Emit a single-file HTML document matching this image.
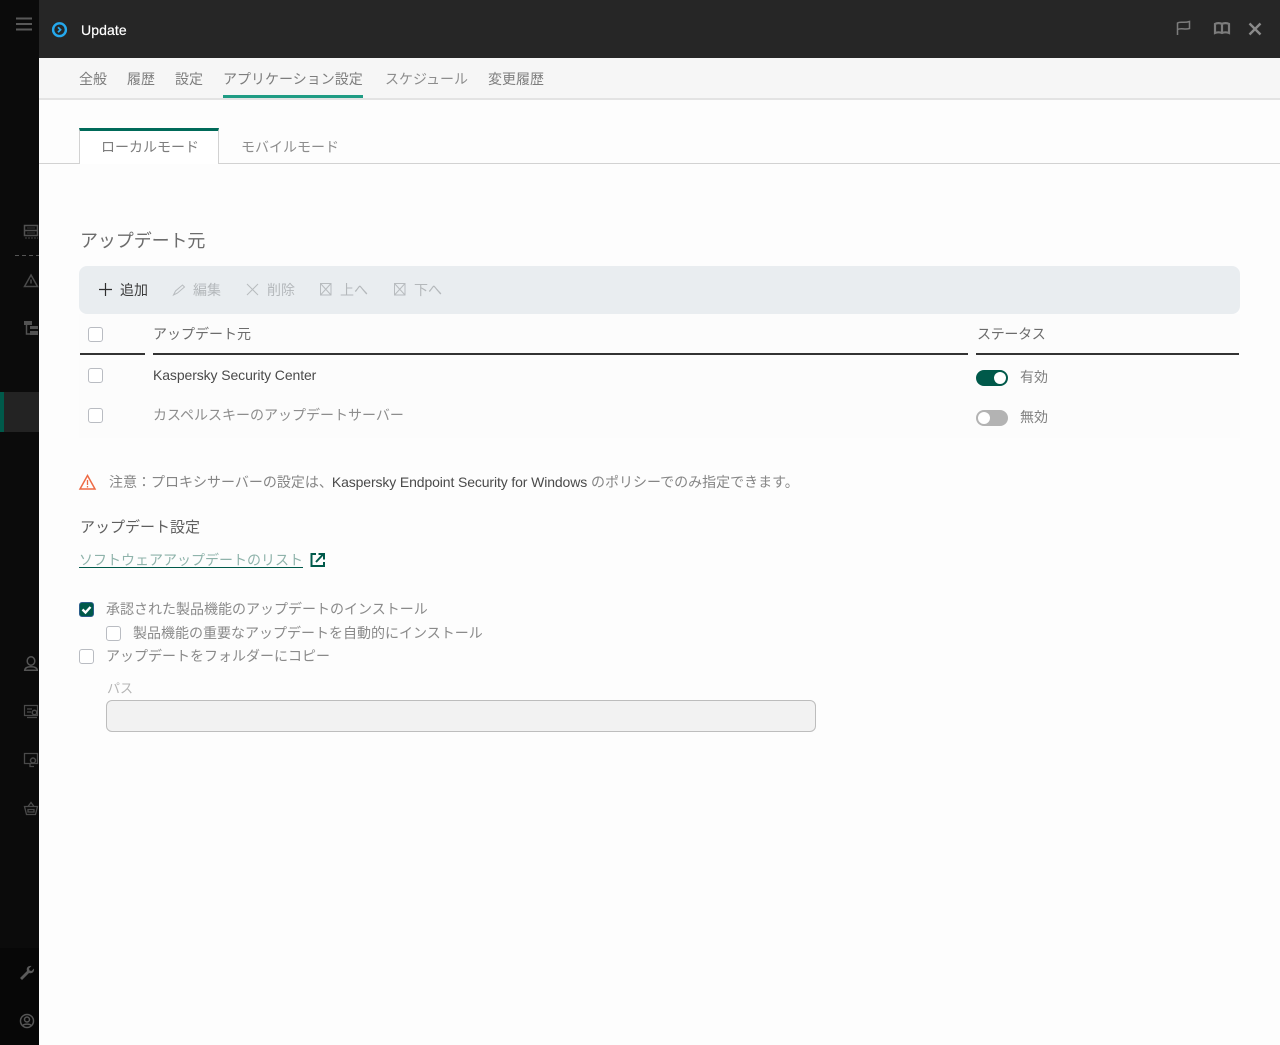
<!DOCTYPE html>
<html lang="ja"><head><meta charset="utf-8"><title>Update</title>
<style>
html,body{margin:0;padding:0;background:#fdfdfd}
body{width:1280px;height:1045px;position:relative;overflow:hidden;font-family:"Liberation Sans","Noto Sans CJK JP",sans-serif;font-size:14px;color:#5c5c5c}
.a{position:absolute;white-space:nowrap;line-height:20px}
.b{position:absolute}
.cb{position:absolute;width:13px;height:13px;border:1px solid #b9bcc2;border-radius:3px;background:#fff}
.nav{top:69px;color:#7d7d7d}
.lat{color:#4a4a4a}
svg{position:absolute;overflow:visible}
</style></head><body>
<div class="b" style="left:0;top:0;width:39px;height:1045px;background:#0b0b0b"></div>
<div class="b" style="left:0;top:948px;width:39px;height:97px;background:#070707"></div>
<div class="b" style="left:39px;top:0;width:1241px;height:58px;background:#262626"></div>
<div class="b" style="left:39px;top:58px;width:1241px;height:40px;background:#f6f6f6;border-bottom:2px solid #e3e3e3"></div>
<div class="b" style="left:0;top:392px;width:39px;height:40px;background:#232323"></div>
<div class="b" style="left:0;top:392px;width:4px;height:40px;background:#00594a"></div>

<svg style="left:0;top:0" width="39" height="1045" fill="none" stroke="#4a4a4a" stroke-width="1.500">
<path d="M16 18.500H32M16 24H32M16 29.500H32" stroke="#585858" stroke-width="2"/>
<path d="M24.500 225.500h13v5h-13zM24.500 230.500h13v5h-13z" stroke="#505050"/>
<path d="M27 228h8M27 233h8" stroke="#333" stroke-width="1"/>
<path d="M25 238h13" stroke="#444" stroke-width="1" stroke-dasharray="2 1"/>
<path d="M15 255.500H39" stroke="#555" stroke-width="1" stroke-dasharray="4 3"/>
<path d="M31 275l6.500 11.500h-13zM31 279.500v4"/>
<path d="M24 321h8v4h-8zM30 326h8v3h-8zM30 331h8v4h-8z" fill="#525252" stroke="none"/>
<path d="M26.500 325v9H30" stroke="#525252"/>
<ellipse cx="31" cy="661" rx="3.800" ry="4.200" stroke="#555"/>
<path d="M24.700 670.300c.3-3 3.500-3.500 6.300-3.500s6 .5 6.300 3.500z" stroke="#555"/>
<path d="M24.500 705.500h13v10h-13zM27 709h5M27 712h4M27 717.500h10" stroke-width="1.200"/>
<circle cx="34.500" cy="712.500" r="2.300" fill="#0b0b0b"/>
<path d="M24.500 753.500h13v10h-13zM30 763.500v3h4" stroke-width="1.300"/>
<circle cx="33" cy="760.500" r="2.500" fill="#0b0b0b"/>
<path d="M24.500 806.500h13l-2 8h-9zM28 806.500l3-4 3 4M28 809.500h6v2.500h-6z" stroke-width="1.300"/>
<path d="M20 978l7-7c-1-3 1-5.500 4.500-5l-2.500 2.500.5 2 2 .5 2.500-2.500c.5 3.500-2 5.500-5 4.500l-7 7z" fill="#5a5a5a" stroke="none"/>
<circle cx="27" cy="1021" r="6.500" stroke="#555"/>
<circle cx="27" cy="1019.500" r="2.500" stroke="#555"/>
<path d="M22.500 1026c1-2.500 8-2.500 9 0" stroke="#555"/>
</svg>

<svg style="left:51px;top:21px" width="18" height="18" fill="none"><circle cx="8.500" cy="8.700" r="6.400" stroke="#25a9ee" stroke-width="2.400"/><path d="M7 6.200l2.500 2.500L7 11.200" stroke="#25a9ee" stroke-width="1.800"/></svg>
<div class="a" style="left:81px;top:20px;color:#fff;font-size:14px;letter-spacing:.1px;-webkit-text-stroke:.2px #fff">Update</div>

<svg style="left:1170px;top:15px" width="110" height="30" fill="none" stroke="#7c7c7c">
<path d="M7.500 20V8c3-2 6 .5 12-1.500v7c-5 1.500-8-1-12 1" stroke-width="1.500"/>
<path d="M45 9c2-1.200 5-1.200 7 0 2-1.200 5-1.200 7 0v9c-2-.8-5-.8-7 0-2-.8-5-.8-7 0zM52 9v9" stroke-width="2.200"/>
<path d="M79.500 8.500l11 11M90.500 8.500l-11 11" stroke="#8a8a8a" stroke-width="2.400"/>
</svg>

<div class="a nav" style="left:79px">全般</div>
<div class="a nav" style="left:127px">履歴</div>
<div class="a nav" style="left:175px">設定</div>
<div class="a nav" style="left:223px">アプリケーション設定</div>
<div class="b" style="left:223px;top:95px;width:140px;height:3px;background:#1f9c84"></div>
<div class="a nav" style="left:385px;color:#8d8d8d">スケジュール</div>
<div class="a nav" style="left:488px">変更履歴</div>

<div class="b" style="left:39px;top:163px;width:1241px;height:1px;background:#d2d2d2"></div>
<div class="b" style="left:79px;top:128px;width:138px;height:33px;background:#fff;border:1px solid #d2d2d2;border-top:3px solid #006a59;border-bottom:0"></div>
<div class="a" style="left:101px;top:137px;color:#7d7d7d">ローカルモード</div>
<div class="a" style="left:241px;top:137px;color:#8d8d8d">モバイルモード</div>

<div class="a" style="left:80px;top:230px;font-size:18px;line-height:22px;color:#6c6c6c;letter-spacing:-.1px">アップデート元</div>

<div class="b" style="left:79px;top:266px;width:1161px;height:48px;background:#e9edf0;border-radius:8px"></div>
<div class="b" style="left:79px;top:314px;width:1161px;height:124px;background:#fcfcfc"></div>
<svg style="left:79px;top:266px" width="380" height="48" fill="none">
<path d="M26.500 17v13M20 23.500h13" stroke="#2f2f2f" stroke-width="1.200"/>
<path d="M94.500 29l2-4 7-6 2 2-7 6z" stroke="#b8bcbf"/>
<path d="M168 18l11 11M179 18l-11 11" stroke="#b8bcbf"/>
<path d="M241.500 17.500h10.500v11.500h-10.500zM241.500 17.500l10.500 11.500M252 17.500l-10.500 11.500" stroke="#b8bcbf"/>
<path d="M315.500 17.500h10.500v11.500h-10.500zM315.500 17.500l10.500 11.500M326 17.500l-10.500 11.500" stroke="#b8bcbf"/>
</svg>
<div class="a" style="left:120px;top:280px;color:#3c3c3c">追加</div>
<div class="a" style="left:193px;top:280px;color:#b4b8bb">編集</div>
<div class="a" style="left:267px;top:280px;color:#b4b8bb">削除</div>
<div class="a" style="left:340px;top:280px;color:#b4b8bb">上へ</div>
<div class="a" style="left:414px;top:280px;color:#b4b8bb">下へ</div>

<div class="cb" style="left:88px;top:327px"></div>
<div class="a" style="left:153px;top:324px;color:#6c6c6c">アップデート元</div>
<div class="a" style="left:977px;top:324px;color:#6c6c6c;letter-spacing:-.3px">ステータス</div>
<div class="b" style="left:80px;top:353px;width:65px;height:2px;background:#333"></div>
<div class="b" style="left:153px;top:353px;width:815px;height:2px;background:#333"></div>
<div class="b" style="left:976px;top:353px;width:263px;height:2px;background:#333"></div>

<div class="cb" style="left:88px;top:368px"></div>
<div class="a lat" style="left:153px;top:365px;letter-spacing:-.1px">Kaspersky Security Center</div>
<div class="cb" style="left:88px;top:408px"></div>
<div class="a" style="left:153px;top:405px;color:#8d8d8d">カスペルスキーのアップデートサーバー</div>

<div class="b" style="left:976px;top:370px;width:32px;height:16px;border-radius:8px;background:#00594a"></div>
<div class="b" style="left:994px;top:372px;width:12px;height:12px;border-radius:50%;background:#fff"></div>
<div class="a" style="left:1020px;top:367px;color:#808080">有効</div>
<div class="b" style="left:976px;top:410px;width:32px;height:16px;border-radius:8px;background:#b3b3b3"></div>
<div class="b" style="left:978px;top:412px;width:12px;height:12px;border-radius:50%;background:#fff"></div>
<div class="a" style="left:1020px;top:407px;color:#808080">無効</div>

<svg style="left:79px;top:474px" width="18" height="17" fill="none"><path d="M8.500 1.500L16 15H1z" stroke="#ee6a44" stroke-width="1.500"/><path d="M8.500 6v5M8.500 12v1.500" stroke="#ee6a44" stroke-width="1.300"/></svg>
<div class="a" style="left:109px;top:472px;color:#858585">注意：プロキシサーバーの設定は、<span class="lat" style="letter-spacing:-.12px;margin-left:-1px">Kaspersky Endpoint Security for Windows</span> のポリシーでのみ指定できます。</div>

<div class="a" style="left:80px;top:518px;color:#5f5f5f;font-size:15px">アップデート設定</div>
<div class="a" style="left:79px;top:550px;color:#8fb3ab;border-bottom:1px solid #00594a;line-height:21px;height:17px">ソフトウェアアップデートのリスト</div>
<svg style="left:310px;top:552px" width="16" height="16" fill="none" stroke="#00594a" stroke-width="2"><path d="M6 2H1.500v12H14V10"/><path d="M6 10l7-7.500M8.500 2H14v5.500"/></svg>

<div class="b" style="left:79px;top:602px;width:13px;height:13px;border-radius:3px;background:#00594a;border:1px solid #2c5e8c"></div>
<svg style="left:79px;top:602px" width="15" height="15" fill="none"><path d="M3.500 7.500l3 3 5-5.500" stroke="#fff" stroke-width="2.400"/></svg>
<div class="a" style="left:106px;top:599px;color:#8a8a8a">承認された製品機能のアップデートのインストール</div>
<div class="cb" style="left:106px;top:626px"></div>
<div class="a" style="left:133px;top:623px;color:#8a8a8a">製品機能の重要なアップデートを自動的にインストール</div>
<div class="cb" style="left:79px;top:649px"></div>
<div class="a" style="left:106px;top:646px;color:#8a8a8a">アップデートをフォルダーにコピー</div>
<div class="a" style="left:107px;top:679px;font-size:13px;color:#b5b5b5">パス</div>
<div class="b" style="left:106px;top:700px;width:708px;height:30px;background:#f2f2f2;border:1px solid #bdbdbd;border-radius:6px"></div>
</body></html>
